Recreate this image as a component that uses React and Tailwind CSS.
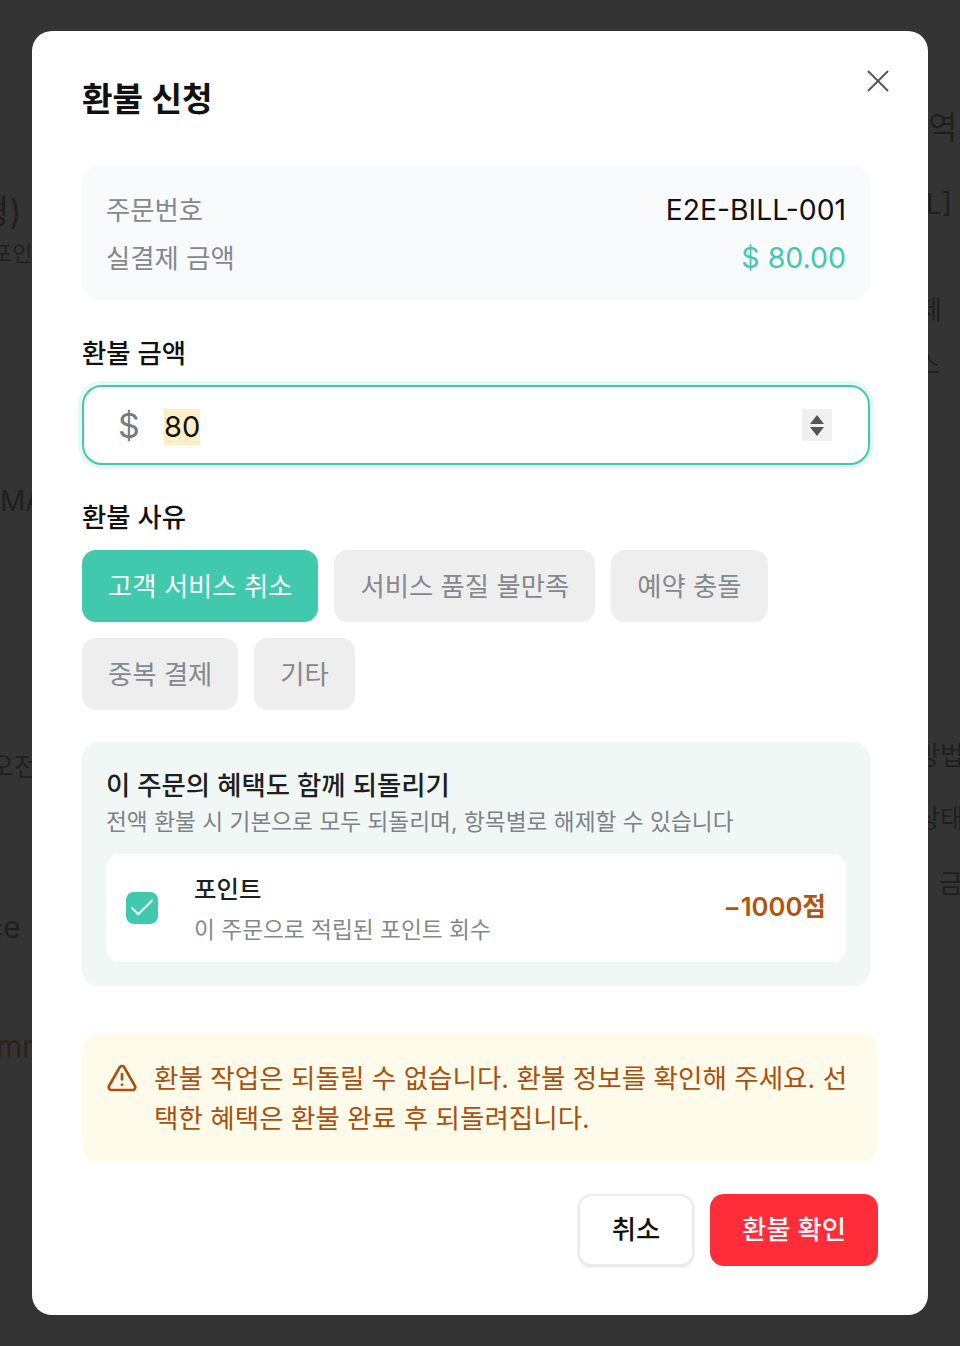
import React from 'react';
import { X, TriangleAlert, Check } from 'lucide-react';

const FONT = "font-['Inter','Noto_Sans_CJK_KR',sans-serif]";

// dimmed page that sticks out around the modal
const BackdropText = ({ className, children }) => (
  <span className={`absolute whitespace-nowrap leading-none text-[#1f1f1f] ${className}`}>{children}</span>
);

const Chip = ({ active, children }) => (
  <button
    className={`h-[72px] rounded-[14px] px-[26px] text-[26.35px] leading-none ${
      active ? 'bg-[#41c9ae] text-white' : 'bg-[#eeeeee] text-[#85888d]'
    }`}
  >
    {children}
  </button>
);

const App = () => {
  return (
    <div className={`${FONT} relative flex h-[1346px] w-[960px] items-center justify-center overflow-hidden bg-[#343434]`}>
      {/* Background page */}
      <BackdropText className="left-[-22px] top-[195px] text-[34px]">형)</BackdropText>
      <BackdropText className="left-[-8px] top-[242px] text-[22px]">포인</BackdropText>
      <BackdropText className="left-0 top-[487px] text-[28px]">MA</BackdropText>
      <BackdropText className="left-[-10px] top-[754px] text-[26px]">오전</BackdropText>
      <BackdropText className="left-[-14px] top-[912px] text-[30px]">ce</BackdropText>
      <BackdropText className="left-[-4px] top-[1031px] text-[30px] text-[#2e2018]">mm</BackdropText>
      <BackdropText className="left-[928px] top-[112px] text-[32px]">역</BackdropText>
      <BackdropText className="left-[926px] top-[190px] text-[28px]">L]</BackdropText>
      <BackdropText className="left-[918px] top-[297px] text-[26px]">제</BackdropText>
      <BackdropText className="left-[916px] top-[352px] text-[26px]">스</BackdropText>
      <BackdropText className="left-[916px] top-[743px] text-[26px]">방법</BackdropText>
      <BackdropText className="left-[916px] top-[806px] text-[26px]">상태</BackdropText>
      <BackdropText className="left-[939px] top-[871px] text-[26px]">금</BackdropText>

      {/* Modal */}
      <div className="relative z-10 flex h-[1284px] w-[896px] flex-col rounded-[20px] bg-white px-[50px]">
        <button className="absolute right-[31px] top-[31px] text-[#55585c]">
          <X size={38} strokeWidth={1.2} />
        </button>

        <h2 className="mt-[47px] text-[33.2px] font-semibold leading-[42px] text-[#111111]">환불 신청</h2>

        {/* Order summary */}
        <div className="mt-[46px] flex h-[134px] w-[788px] flex-col justify-center gap-[14px] rounded-[16px] bg-[#f9fafc] px-6 pt-[1px] leading-[34px]">
          <div className="flex items-center justify-between">
            <span className="text-[26.4px] text-[#85888d]">주문번호</span>
            <span className="text-[28.3px] text-[#111111]">E2E-BILL-001</span>
          </div>
          <div className="flex items-center justify-between">
            <span className="text-[26.4px] text-[#85888d]">실결제 금액</span>
            <span className="text-[28.5px] text-[#41c9ae]">$ 80.00</span>
          </div>
        </div>

        {/* Amount */}
        <label className="mt-[36px] text-[26.4px] font-medium leading-[34px] text-[#111111]">환불 금액</label>
        <div className="mt-[15px] flex h-[80px] w-[788px] items-center rounded-[20px] border-2 border-[#41c9ae] pl-[34px] pr-[36px] shadow-[0_0_0_4px_#e6f8f4]">
          <span className="mt-[2px] w-[46px] text-[34px] leading-none text-[#77797d]">$</span>
          <span className="mt-[4px] bg-[#fdeec4] text-[29px] leading-[36px] text-[#111111]">80</span>
          <div className="ml-auto flex h-8 w-[30px] flex-col items-center justify-center gap-[3px] bg-[#f0f0f0]">
            <svg width="14" height="9" viewBox="0 0 14 9"><path d="M7 0 14 9H0z" fill="#555555" /></svg>
            <svg width="14" height="9" viewBox="0 0 14 9"><path d="M0 0h14L7 9z" fill="#555555" /></svg>
          </div>
        </div>

        {/* Reason */}
        <label className="mt-[35px] text-[26.4px] font-medium leading-[34px] text-[#111111]">환불 사유</label>
        <div className="mt-4 flex w-[788px] flex-wrap gap-4">
          <Chip active>고객 서비스 취소</Chip>
          <Chip>서비스 품질 불만족</Chip>
          <Chip>예약 충돌</Chip>
          <Chip>중복 결제</Chip>
          <Chip>기타</Chip>
        </div>

        {/* Benefits */}
        <div className="mt-8 h-[244px] w-[788px] rounded-[16px] bg-[#f1f7f4] px-6 pt-[26px]">
          <p className="text-[26.4px] font-medium leading-[34px] text-[#1c1f24]">이 주문의 혜택도 함께 되돌리기</p>
          <p className="mt-[3px] text-[22.7px] leading-[34px] text-[#7d8288]">
            전액 환불 시 기본으로 모두 되돌리며, 항목별로 해제할 수 있습니다
          </p>
          <div className="mt-[15px] flex h-[108px] items-center rounded-[14px] bg-white pl-5 pr-5">
            <span className="flex h-8 w-8 items-center justify-center rounded-[8px] bg-[#41c9ae] text-white">
              <Check size={30} strokeWidth={1.6} />
            </span>
            <div className="ml-9 flex flex-col gap-[9px] pt-[2px]">
              <span className="text-[24.4px] font-medium leading-[32px] text-[#1c1f24]">포인트</span>
              <span className="text-[22.7px] leading-[32px] text-[#85888d]">이 주문으로 적립된 포인트 회수</span>
            </div>
            <span className="mb-[2px] ml-auto text-[25.7px] font-semibold text-[#b4540a]">−1000점</span>
          </div>
        </div>

        {/* Warning */}
        <div className="mt-12 flex h-[128px] w-[796px] items-start gap-[16px] rounded-[16px] bg-[#fffbea] px-6 pt-[24px]">
          <TriangleAlert size={32} strokeWidth={2} className="mt-[4px] shrink-0 text-[#a9500e]" />
          <p className="text-[26.55px] leading-[40px] text-[#a9500e]">
            환불 작업은 되돌릴 수 없습니다. 환불 정보를 확인해 주세요. 선택한 혜택은 환불 완료 후 되돌려집니다.
          </p>
        </div>

        {/* Actions */}
        <div className="mt-8 flex justify-end gap-4">
          <button className="h-[72px] w-[116px] rounded-[14px] border-2 border-[#ececec] bg-white text-[26.4px] font-medium text-[#111111] shadow-sm">
            취소
          </button>
          <button className="h-[72px] w-[168px] rounded-[14px] bg-[#ff2d3a] text-[26.4px] font-medium text-white">
            환불 확인
          </button>
        </div>
      </div>
    </div>
  );
};

export default App;
